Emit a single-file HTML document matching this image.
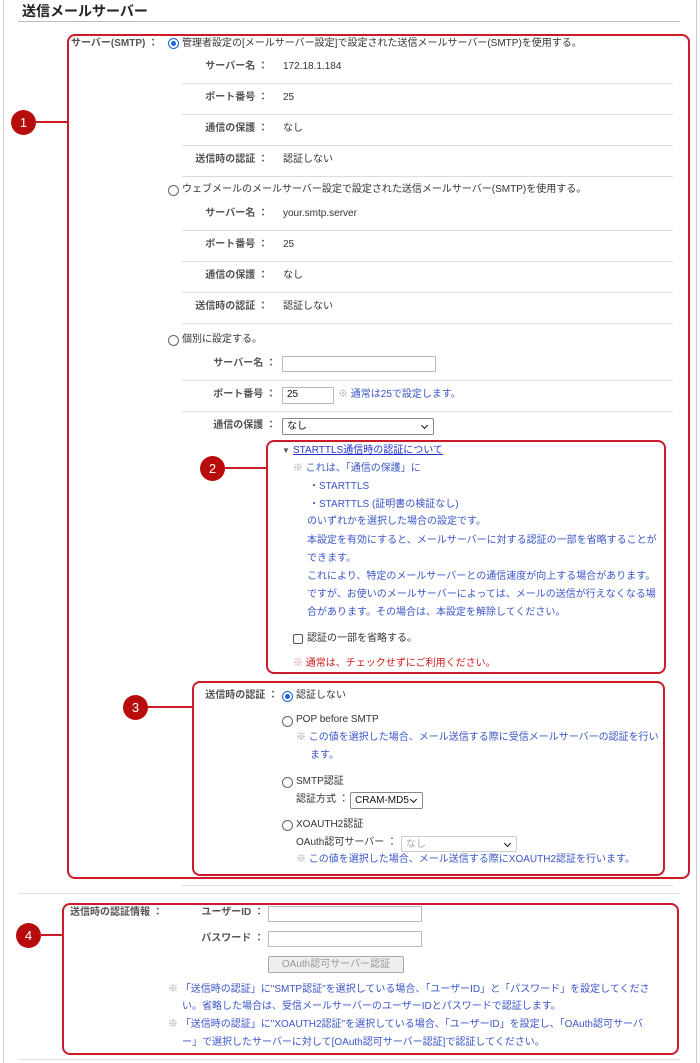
<!DOCTYPE html>
<html><head><meta charset="utf-8">
<style>
*{margin:0;padding:0;box-sizing:border-box}
body{width:700px;height:1063px;background:#fff;position:relative;overflow:hidden;font-family:"Liberation Sans","Noto Sans CJK JP",sans-serif;font-size:10px;color:#333}
.a{position:absolute;white-space:nowrap;line-height:14px}
.b{color:#3a55c8}
.r{color:#d01818}
.lab{text-align:right;font-weight:bold;color:#555}
.hl{position:absolute;height:1px;background:#ddd}
.box{position:absolute;border:2px solid #cc1a2a;border-radius:8px}
.c{position:absolute;width:25px;height:25px;border-radius:50%;background:#b80c0c;color:#fff;font-size:13px;line-height:25px;text-align:center}
.ln{position:absolute;height:2px;background:#cc1a2a}
.rad{position:absolute;width:11px;height:11px;border:1px solid #666;border-radius:50%;background:#fff}
.rad.on{border-color:#1a63d6}
.rad.on:after{content:"";position:absolute;left:2px;top:2px;width:5px;height:5px;border-radius:50%;background:#1a63d6}
.in{position:absolute;border:1px solid #bbb;background:#fff;font-size:10px;padding-left:4px;line-height:14px}
.sel{position:absolute;border:1px solid #888;border-radius:2px;background:#fff;font-size:10px;padding-left:4px;line-height:15px;color:#111}
.sel:after{content:"";position:absolute;right:6px;top:4px;width:4px;height:4px;border-right:1.5px solid #111;border-bottom:1.5px solid #111;transform:rotate(45deg)}
</style></head><body>
<div style="position:absolute;left:3px;top:0;width:1px;height:1063px;background:#ccc"></div>
<div style="position:absolute;left:696px;top:0;width:1px;height:1063px;background:#ccc"></div>
<div class="a" style="left:22px;top:2px;font-size:14px;font-weight:bold;color:#222;line-height:18px">送信メールサーバー</div>
<div class="hl" style="left:18px;top:21px;width:662px;background:#bbb"></div>

<div class="box" style="left:67px;top:34px;width:623px;height:845px"></div>
<div class="c" style="left:11px;top:110px">1</div>
<div class="ln" style="left:35px;top:121px;width:33px"></div>

<div class="a" style="left:71px;top:37px;font-weight:bold;color:#555">サーバー(SMTP) ：</div>
<div class="rad on" style="left:168px;top:38px"></div>
<div class="a" style="left:182px;top:37px">管理者設定の[メールサーバー設定]で設定された送信メールサーバー(SMTP)を使用する。</div>
<div class="a lab" style="left:150px;width:118px;top:60px">サーバー名 ：</div><div class="a" style="left:283px;top:60px">172.18.1.184</div>
<div class="hl" style="left:182px;top:83px;width:491px"></div>
<div class="a lab" style="left:150px;width:118px;top:91px">ポート番号 ：</div><div class="a" style="left:283px;top:91px">25</div>
<div class="hl" style="left:182px;top:114px;width:491px"></div>
<div class="a lab" style="left:150px;width:118px;top:122px">通信の保護 ：</div><div class="a" style="left:283px;top:122px">なし</div>
<div class="hl" style="left:182px;top:145px;width:491px"></div>
<div class="a lab" style="left:150px;width:118px;top:153px">送信時の認証 ：</div><div class="a" style="left:283px;top:153px">認証しない</div>
<div class="hl" style="left:182px;top:176px;width:491px"></div>

<div class="rad" style="left:168px;top:185px"></div>
<div class="a" style="left:182px;top:183px">ウェブメールのメールサーバー設定で設定された送信メールサーバー(SMTP)を使用する。</div>
<div class="a lab" style="left:150px;width:118px;top:207px">サーバー名 ：</div><div class="a" style="left:283px;top:207px">your.smtp.server</div>
<div class="hl" style="left:182px;top:230px;width:491px"></div>
<div class="a lab" style="left:150px;width:118px;top:238px">ポート番号 ：</div><div class="a" style="left:283px;top:238px">25</div>
<div class="hl" style="left:182px;top:261px;width:491px"></div>
<div class="a lab" style="left:150px;width:118px;top:269px">通信の保護 ：</div><div class="a" style="left:283px;top:269px">なし</div>
<div class="hl" style="left:182px;top:292px;width:491px"></div>
<div class="a lab" style="left:150px;width:118px;top:300px">送信時の認証 ：</div><div class="a" style="left:283px;top:300px">認証しない</div>
<div class="hl" style="left:182px;top:323px;width:491px"></div>

<div class="rad" style="left:168px;top:335px"></div>
<div class="a" style="left:182px;top:333px">個別に設定する。</div>
<div class="a lab" style="left:150px;width:126px;top:357px">サーバー名 ：</div>
<div class="in" style="left:282px;top:356px;width:154px;height:16px"></div>
<div class="hl" style="left:182px;top:380px;width:491px"></div>
<div class="a lab" style="left:150px;width:126px;top:388px">ポート番号 ：</div>
<div class="in" style="left:282px;top:387px;width:52px;height:17px;color:#111">25</div>
<div class="a b" style="left:338px;top:388px"><span style="color:#99a">※</span> 通常は25で設定します。</div>
<div class="hl" style="left:182px;top:411px;width:491px"></div>
<div class="a lab" style="left:150px;width:126px;top:419px">通信の保護 ：</div>
<div class="sel" style="left:282px;top:418px;width:152px;height:17px">なし</div>

<div class="box" style="left:266px;top:440px;width:400px;height:234px"></div>
<div class="c" style="left:200px;top:456px">2</div>
<div class="ln" style="left:224px;top:467px;width:43px"></div>
<div class="a" style="left:282px;top:444px;font-size:8px;color:#555">▼</div>
<div class="a" style="left:293px;top:444px;color:#2233cc;text-decoration:underline">STARTTLS通信時の認証について</div>
<div class="a b" style="left:293px;top:462px"><span style="color:#99a">※</span> これは、「通信の保護」に</div>
<div class="a b" style="left:309px;top:480px">・STARTTLS</div>
<div class="a b" style="left:309px;top:498px">・STARTTLS (証明書の検証なし)</div>
<div class="a b" style="left:307px;top:515px">のいずれかを選択した場合の設定です。</div>
<div class="a b" style="left:307px;top:534px">本設定を有効にすると、メールサーバーに対する認証の一部を省略することが</div>
<div class="a b" style="left:307px;top:552px">できます。</div>
<div class="a b" style="left:307px;top:570px">これにより、特定のメールサーバーとの通信速度が向上する場合があります。</div>
<div class="a b" style="left:307px;top:588px">ですが、お使いのメールサーバーによっては、メールの送信が行えなくなる場</div>
<div class="a b" style="left:307px;top:606px">合があります。その場合は、本設定を解除してください。</div>
<div style="position:absolute;left:293px;top:634px;width:10px;height:10px;border:1px solid #555;border-radius:2px"></div>
<div class="a" style="left:307px;top:632px">認証の一部を省略する。</div>
<div class="a r" style="left:293px;top:657px"><span style="color:#e88">※</span> 通常は、チェックせずにご利用ください。</div>

<div class="box" style="left:192px;top:681px;width:473px;height:195px"></div>
<div class="c" style="left:123px;top:695px">3</div>
<div class="ln" style="left:147px;top:706px;width:46px"></div>
<div class="a lab" style="left:190px;width:88px;top:689px">送信時の認証 ：</div>
<div class="rad on" style="left:282px;top:691px"></div><div class="a" style="left:296px;top:689px">認証しない</div>
<div class="rad" style="left:282px;top:716px"></div><div class="a" style="left:296px;top:713px">POP before SMTP</div>
<div class="a b" style="left:296px;top:731px"><span style="color:#99a">※</span> この値を選択した場合、メール送信する際に受信メールサーバーの認証を行い</div>
<div class="a b" style="left:310px;top:749px">ます。</div>
<div class="rad" style="left:282px;top:777px"></div><div class="a" style="left:296px;top:775px">SMTP認証</div>
<div class="a" style="left:296px;top:793px">認証方式 ：</div>
<div class="sel" style="left:350px;top:792px;width:73px;height:17px">CRAM-MD5</div>
<div class="rad" style="left:282px;top:820px"></div><div class="a" style="left:296px;top:818px">XOAUTH2認証</div>
<div class="a" style="left:296px;top:836px">OAuth認可サーバー ：</div>
<div class="sel" style="left:401px;top:836px;width:116px;height:16px;border-color:#ccc;color:#aaa">なし</div>
<div class="a b" style="left:296px;top:853px"><span style="color:#99a">※</span> この値を選択した場合、メール送信する際にXOAUTH2認証を行います。</div>

<div class="hl" style="left:182px;top:885px;width:491px"></div>
<div class="hl" style="left:18px;top:893px;width:662px"></div>

<div class="box" style="left:62px;top:903px;width:617px;height:152px"></div>
<div class="c" style="left:16px;top:923px">4</div>
<div class="ln" style="left:40px;top:934px;width:23px"></div>
<div class="a" style="left:70px;top:906px;font-weight:bold;color:#555">送信時の認証情報 ：</div>
<div class="a lab" style="left:180px;width:84px;top:906px">ユーザーID ：</div>
<div class="in" style="left:268px;top:906px;width:154px;height:16px"></div>
<div class="a lab" style="left:180px;width:84px;top:932px">パスワード ：</div>
<div class="in" style="left:268px;top:931px;width:154px;height:16px"></div>
<div style="position:absolute;left:268px;top:956px;width:136px;height:17px;border:1px solid #aaa;border-radius:2px;background:#eee;color:#999;text-align:center;line-height:15px">OAuth認可サーバー認証</div>
<div class="a b" style="left:168px;top:983px"><span style="color:#99a">※</span> 「送信時の認証」に"SMTP認証"を選択している場合、「ユーザーID」と「パスワード」を設定してくださ</div>
<div class="a b" style="left:182px;top:1000px">い。省略した場合は、受信メールサーバーのユーザーIDとパスワードで認証します。</div>
<div class="a b" style="left:168px;top:1018px"><span style="color:#99a">※</span> 「送信時の認証」に"XOAUTH2認証"を選択している場合、「ユーザーID」を設定し、「OAuth認可サーバ</div>
<div class="a b" style="left:182px;top:1036px">ー」で選択したサーバーに対して[OAuth認可サーバー認証]で認証してください。</div>
<div class="hl" style="left:18px;top:1059px;width:662px"></div>
</body></html>
